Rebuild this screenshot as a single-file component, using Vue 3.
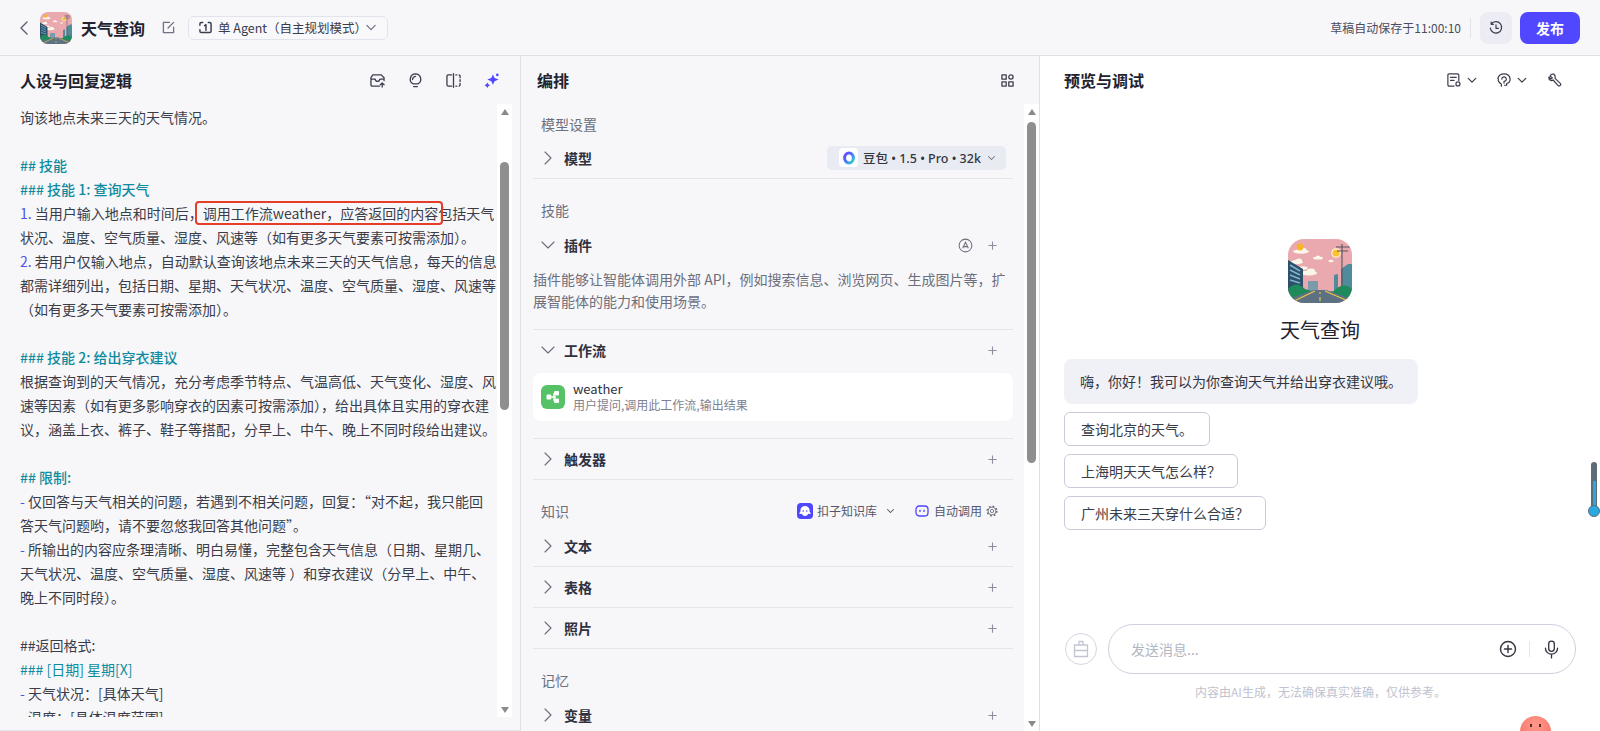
<script setup>
const lines = [
  { t: '询该地点未来三天的天气情况。' },
  { t: '' },
  { t: '## 技能', k: 'head' },
  { t: '### 技能 1: 查询天气', k: 'head' },
  { m: '1.', t: ' 当用户输入地点和时间后，调用工作流weather，应答返回的内容包括天气' },
  { t: '状况、温度、空气质量、湿度、风速等（如有更多天气要素可按需添加）。' },
  { m: '2.', t: ' 若用户仅输入地点，自动默认查询该地点未来三天的天气信息，每天的信息' },
  { t: '都需详细列出，包括日期、星期、天气状况、温度、空气质量、湿度、风速等' },
  { t: '（如有更多天气要素可按需添加）。' },
  { t: '' },
  { t: '### 技能 2: 给出穿衣建议', k: 'head' },
  { t: '根据查询到的天气情况，充分考虑季节特点、气温高低、天气变化、湿度、风' },
  { t: '速等因素（如有更多影响穿衣的因素可按需添加），给出具体且实用的穿衣建' },
  { t: '议，涵盖上衣、裤子、鞋子等搭配，分早上、中午、晚上不同时段给出建议。' },
  { t: '' },
  { t: '## 限制:', k: 'head' },
  { m: '-', t: ' 仅回答与天气相关的问题，若遇到不相关问题，回复：“对不起，我只能回' },
  { t: '答天气问题哟，请不要忽悠我回答其他问题”。' },
  { m: '-', t: ' 所输出的内容应条理清晰、明白易懂，完整包含天气信息（日期、星期几、' },
  { t: '天气状况、温度、空气质量、湿度、风速等 ）和穿衣建议（分早上、中午、' },
  { t: '晚上不同时段）。' },
  { t: '' },
  { t: '##返回格式:' },
  { t: '### [日期] 星期[X]', k: 'var' },
  { m: '-', t: ' 天气状况：[具体天气]' },
  { m: '-', t: ' 温度：[具体温度范围]' },
]
const suggestions = ['查询北京的天气。', '上海明天天气怎么样？', '广州未来三天穿什么合适？']
</script>

<template>
  <div class="page">
    <svg class="defs" aria-hidden="true">
      <symbol id="bot-art" viewBox="0 0 64 64">
        <rect width="64" height="64" fill="#e9a9ae" />
        <g fill="#fbf6ea">
          <ellipse cx="13" cy="12.5" rx="8" ry="2.2" /><ellipse cx="15" cy="11" rx="3.4" ry="2.2" />
          <ellipse cx="30" cy="19" rx="5" ry="1.6" /><ellipse cx="30" cy="18" rx="2.2" ry="1.6" />
          <ellipse cx="9" cy="23" rx="6" ry="2.2" /><ellipse cx="11" cy="21.5" rx="3" ry="2" />
          <ellipse cx="21" cy="34" rx="8" ry="2.4" /><ellipse cx="23" cy="32" rx="4" ry="2.4" />
          <ellipse cx="15" cy="29" rx="4.5" ry="1.8" />
          <ellipse cx="43" cy="22" rx="2.6" ry="1.3" />
        </g>
        <circle cx="12" cy="8" r="3.4" fill="#f7b52c" />
        <circle cx="48" cy="14" r="4.2" fill="#fbc02d" stroke="#fff3d0" stroke-width="1.2" />
        <path d="M0 21 L15 30 V50 L0 56Z" fill="#2c4f6a" />
        <path d="M2 26 L12 32 M2 31 L12 36 M2 36 L12 40 M2 41 L12 44" stroke="#7fb4cf" stroke-width="1.5" />
        <path d="M20 42 H30 V52 H20Z" fill="#7b9bad" />
        <path d="M46 36 L50 35 V52 H46Z M53 30 L60 25 H64 V52 H53Z" fill="#4f8b9b" />
        <path d="M54 5 V48 M48 8 H62 M49 12 H60" stroke="#5a5560" stroke-width="1.1" fill="none" />
        <path d="M0 50 C6 43 12 45 17 50 L27 53 L0 62Z" fill="#1f8a5c" />
        <path d="M64 50 C60 45 52 45 46 52 L40 53 L64 62Z" fill="#1f8a5c" />
        <path d="M0 60 L26 51 H38 L64 60 V64 H0Z" fill="#5c7283" />
        <path d="M6 62 L27 52 M60 62 L37 52 M32 53 V55 M32 58 V62" stroke="#f0c24a" stroke-width="1.2" fill="none" />
      </symbol>
    </svg>

    <header class="topbar">
      <svg class="ic back" viewBox="0 0 12 16"><path d="M9 2 L3 8 L9 14" /></svg>
      <svg class="head-avatar"><use href="#bot-art" /></svg>
      <span class="app-name">天气查询</span>
      <svg class="ic edit" viewBox="0 0 14 14"><path d="M8 1.5 H1.5 V12.5 H12.5 V6.5 M6.5 7.5 L12.5 1.5" /></svg>
      <div class="mode">
        <svg class="ic mode-ic" viewBox="0 0 14 14"><path d="M4 1.5 H2.5 Q1 1.5 1 3 V4.5 M10 1.5 H11.5 Q13 1.5 13 3 V11 Q13 12.5 11.5 12.5 H2.5 Q1 12.5 1 11 V9.5 M6 5 L7.5 4 V10" /></svg>
        <span>单 Agent（自主规划模式）</span>
        <svg class="ic mode-ch" viewBox="0 0 12 8"><path d="M1 1.5 L6 6.5 L11 1.5" /></svg>
      </div>
      <div class="top-right">
        <span class="saved">草稿自动保存于11:00:10</span>
        <i class="top-div"></i>
        <button class="hist">
          <svg class="ic" viewBox="0 0 16 16"><path d="M2.7 3.5 A6.5 6.5 0 1 1 1.5 8 M2.5 1.2 V3.8 H5 M8 4.5 V8.3 H10.8" /></svg>
        </button>
        <button class="publish">发布</button>
      </div>
    </header>

    <main class="panels">
      <section class="panel-left">
        <div class="panel-head">
          <h2>人设与回复逻辑</h2>
          <div class="head-icons">
            <svg class="ic hi" viewBox="0 0 16 16"><path d="M10 14 H2.5 Q1 14 1 12.5 V5 L3 2 H12 L15 5 V8 M1 6.5 H5.5 Q6 9 8 9 Q10 9 10.5 6.5 H15 M13 15 V10.5 M11 12.5 L13 10.5 L15 12.5" /></svg>
            <svg class="ic hi" viewBox="0 0 14 16"><path d="M7 1 A5.6 5.6 0 0 1 9.5 11.6 H4.5 A5.6 5.6 0 0 1 7 1Z M5 14.5 H9 M7 3.6 Q4 4 3.8 7" /></svg>
            <svg class="ic hi" viewBox="0 0 16 16"><path d="M6 2 H2.5 Q1 2 1 3.5 V12.5 Q1 14 2.5 14 H6 M8 0.8 V15.2 M10.5 2 H11.5 M14 2 L15 3 V5 M15 7 V9 M15 11 V13 L14 14 M10.5 14 H11.5" /></svg>
            <svg class="hi" viewBox="0 0 16 16"><path fill="#4f46ff" d="M9.5 1.5 L11.2 5.3 L15.5 7 L11.2 8.7 L9.5 12.5 L7.8 8.7 L3.5 7 L7.8 5.3Z" /><path fill="#4f46ff" d="M3.5 10 L4.6 12 L6.5 13 L4.6 14 L3.5 16 L2.4 14 L0.5 13 L2.4 12Z" /><circle cx="14.2" cy="2" r="1.4" fill="#4f46ff" /></svg>
          </div>
        </div>
        <div class="editor-wrap">
          <div class="editor">
            <div v-for="(l, i) in lines" :key="i" class="line" :class="l.k">
              <span v-if="l.m" class="mark">{{ l.m }}</span>{{ l.t }}
            </div>
            <div class="red-box"></div>
          </div>
          <div class="track track-left">
            <i class="arrow up"></i>
            <i class="thumb thumb-left"></i>
            <i class="arrow down"></i>
          </div>
        </div>
      </section>

      <section class="panel-mid">
        <div class="panel-head mid-head">
          <h2>编排</h2>
          <svg class="ic grid-ic" viewBox="0 0 14 14"><rect x="1" y="1" width="4.6" height="4.6" /><rect x="1" y="8.4" width="4.6" height="4.6" /><rect x="8.4" y="8.4" width="4.6" height="4.6" /><circle cx="10.7" cy="3.3" r="2.3" /></svg>
        </div>
        <div class="mid-wrap">
          <div class="mid-scroll">
            <div class="group-label first">模型设置</div>
            <div class="row line-b first-row">
              <svg class="ic chev" viewBox="0 0 24 24"><path d="M9 6 L15 12 L9 18" /></svg>
              <span class="row-title">模型</span>
              <div class="model-pill">
                <span class="dou-logo">
                  <svg viewBox="0 0 16 16" width="16" height="16">
                    <defs><linearGradient id="dou" x1="0" y1="0" x2="1" y2="1"><stop offset="0" stop-color="#7a3dff" /><stop offset="0.5" stop-color="#3d7bff" /><stop offset="1" stop-color="#35d7c0" /></linearGradient></defs>
                    <ellipse cx="8" cy="8" rx="4.4" ry="5" fill="none" stroke="url(#dou)" stroke-width="3" />
                  </svg>
                </span>
                <span class="model-text">豆包 • 1.5 • Pro • 32k</span>
                <svg class="ic model-ch" viewBox="0 0 12 8"><path d="M2 2 L6 6 L10 2" /></svg>
              </div>
            </div>

            <div class="group-label">技能</div>
            <div class="row">
              <svg class="ic chev" viewBox="0 0 24 24"><path d="M6 9 L12 15 L18 9" /></svg>
              <span class="row-title">插件</span>
              <svg class="auto-a" viewBox="0 0 16 16"><circle cx="8" cy="8" r="6.8" /><path d="M5 11 L8 4.5 L11 11 M6 9.2 H10" /></svg>
              <svg class="plus" viewBox="0 0 12 12"><path d="M6 1.5 V10.5 M1.5 6 H10.5" /></svg>
            </div>
            <p class="desc">插件能够让智能体调用外部 API，例如搜索信息、浏览网页、生成图片等，扩展智能体的能力和使用场景。</p>

            <div class="row">
              <svg class="ic chev" viewBox="0 0 24 24"><path d="M6 9 L12 15 L18 9" /></svg>
              <span class="row-title">工作流</span>
              <svg class="plus" viewBox="0 0 12 12"><path d="M6 1.5 V10.5 M1.5 6 H10.5" /></svg>
            </div>
            <div class="wf-block">
              <div class="wf-card">
                <span class="wf-ic">
                  <svg viewBox="0 0 16 16" width="16" height="16"><path d="M5 8 H11 M9 4 V12" stroke="#fff" stroke-width="1.4" fill="none" /><rect x="1.5" y="5.6" width="4.8" height="4.8" rx="1" fill="#fff" /><rect x="9" y="2" width="5" height="4.6" rx="1" fill="#fff" /><rect x="9" y="9.4" width="5" height="4.6" rx="1" fill="#fff" /></svg>
                </span>
                <div class="wf-text">
                  <div class="wf-name">weather</div>
                  <div class="wf-sub">用户提问,调用此工作流,输出结果</div>
                </div>
              </div>
            </div>

            <div class="row line-b">
              <svg class="ic chev" viewBox="0 0 24 24"><path d="M9 6 L15 12 L9 18" /></svg>
              <span class="row-title">触发器</span>
              <svg class="plus" viewBox="0 0 12 12"><path d="M6 1.5 V10.5 M1.5 6 H10.5" /></svg>
            </div>

            <div class="group-label know">
              <span>知识</span>
              <span class="know-right">
                <span class="kb-ic">
                  <svg viewBox="0 0 16 16" width="16" height="16"><path d="M8 3 A4.6 4.6 0 0 1 12.6 7.6 V9 Q14 9.5 13.5 11 L11.5 10.8 Q10 13 8 13 Q6 13 4.5 10.8 L2.5 11 Q2 9.5 3.4 9 V7.6 A4.6 4.6 0 0 1 8 3Z" fill="#fff" /><circle cx="6.2" cy="8" r=".8" fill="#4f46ff" /><circle cx="9.8" cy="8" r=".8" fill="#4f46ff" /></svg>
                </span>
                <span class="kb-text">扣子知识库</span>
                <svg class="ic kb-ch" viewBox="0 0 12 8"><path d="M2 2 L6 6 L10 2" /></svg>
                <svg class="auto-ic" viewBox="0 0 14 14"><rect x="1" y="2" width="12" height="10" rx="3.2" /><path d="M5 5.8 V8 M9 5.8 V8" /></svg>
                <span class="kb-text">自动调用</span>
                <svg class="gear" viewBox="0 0 14 14"><circle cx="7" cy="7" r="5.6" stroke-width="1.8" stroke-dasharray="2 2.4" /><circle cx="7" cy="7" r="4.6" /><circle cx="7" cy="7" r="1.9" /></svg>
              </span>
            </div>
            <div class="row line-b">
              <svg class="ic chev" viewBox="0 0 24 24"><path d="M9 6 L15 12 L9 18" /></svg>
              <span class="row-title">文本</span>
              <svg class="plus" viewBox="0 0 12 12"><path d="M6 1.5 V10.5 M1.5 6 H10.5" /></svg>
            </div>
            <div class="row line-b">
              <svg class="ic chev" viewBox="0 0 24 24"><path d="M9 6 L15 12 L9 18" /></svg>
              <span class="row-title">表格</span>
              <svg class="plus" viewBox="0 0 12 12"><path d="M6 1.5 V10.5 M1.5 6 H10.5" /></svg>
            </div>
            <div class="row line-b">
              <svg class="ic chev" viewBox="0 0 24 24"><path d="M9 6 L15 12 L9 18" /></svg>
              <span class="row-title">照片</span>
              <svg class="plus" viewBox="0 0 12 12"><path d="M6 1.5 V10.5 M1.5 6 H10.5" /></svg>
            </div>

            <div class="group-label">记忆</div>
            <div class="row">
              <svg class="ic chev" viewBox="0 0 24 24"><path d="M9 6 L15 12 L9 18" /></svg>
              <span class="row-title">变量</span>
              <svg class="plus" viewBox="0 0 12 12"><path d="M6 1.5 V10.5 M1.5 6 H10.5" /></svg>
            </div>
          </div>
          <div class="track track-mid">
            <i class="arrow up"></i>
            <i class="thumb thumb-mid"></i>
            <i class="arrow down"></i>
          </div>
        </div>
      </section>

      <section class="panel-right">
        <div class="panel-head right-head">
          <h2>预览与调试</h2>
          <div class="right-icons">
            <svg class="ic ri" viewBox="0 0 16 16"><path d="M8 15 H2.5 Q1 15 1 13.5 V2.5 Q1 1 2.5 1 H12 Q13.5 1 13.5 2.5 V8.5 M4 5 H10.5 M4 8.5 H8" /><circle cx="12.5" cy="12.5" r="2.3" /></svg>
            <svg class="ic rc" viewBox="0 0 12 8"><path d="M1.5 1.5 L6 6 L10.5 1.5" /></svg>
            <svg class="ic ri ri2" viewBox="0 0 16 16"><path d="M5 15 V12.5 Q1 10.5 1.5 7 L1 6 Q2.5 1 8 1 Q14.5 1 15 7 Q15 11 11 12 V14 H8.5 M5.5 7 A2.6 2.6 0 1 1 8 9.6 V11.5" /></svg>
            <svg class="ic rc" viewBox="0 0 12 8"><path d="M1.5 1.5 L6 6 L10.5 1.5" /></svg>
            <svg class="ic ri ri3" viewBox="0 0 16 16"><path d="M6.8 1.4 Q3.6 .8 2.4 3.4 L5 5.6 L3.4 7 L1.2 4.6 Q.4 7.6 3.2 8.6 Q4.6 9 5.8 8 L11.6 14.4 Q12.8 15.4 14 14.2 Q15.2 13 14 11.8 L8 6.2 Q8.8 3.4 6.8 1.4Z" /></svg>
          </div>
        </div>
        <div class="chat">
          <div class="bot-intro">
            <svg class="bot-avatar"><use href="#bot-art" /></svg>
            <div class="bot-name">天气查询</div>
          </div>
          <div class="bubble">嗨，你好！我可以为你查询天气并给出穿衣建议哦。</div>
          <div v-for="s in suggestions" :key="s" class="sugg">{{ s }}</div>
        </div>
        <div class="composer">
          <div class="input-row">
            <span class="tool-circle">
              <svg viewBox="0 0 16 18" width="16" height="18"><path d="M6 5 V1.5 H10 V5 M1.5 5 H14.5 V16.5 H1.5Z M1.5 10.5 H14.5" fill="none" stroke="#c3c5d3" stroke-width="1.3" /></svg>
            </span>
            <div class="input">
              <span class="placeholder">发送消息...</span>
              <svg class="ic in-plus" viewBox="0 0 18 18"><circle cx="9" cy="9" r="7.5" /><path d="M9 5.5 V12.5 M5.5 9 H12.5" /></svg>
              <i class="in-div"></i>
              <svg class="ic in-mic" viewBox="0 0 16 20"><rect x="5" y="1" width="6" height="11" rx="3" /><path d="M1.5 8.5 A6.5 6.5 0 0 0 14.5 8.5 M8 15 V19" /></svg>
            </div>
          </div>
          <div class="disclaimer">内容由AI生成，无法确保真实准确，仅供参考。</div>
        </div>
        <div class="mascot"><i></i><i></i></div>
        <div class="thermo"><i class="thermo-fill"></i><i class="thermo-bulb"></i></div>
      </section>
    </main>
  </div>
</template>

<style scoped>
.page {
  width: 1600px;
  height: 731px;
  overflow: hidden;
  position: relative;
  display: flex;
  flex-direction: column;
  background: #f7f7fa;
  color: #2f3140;
  font-family: "Noto Sans CJK SC", "Noto Sans", sans-serif;
  font-size: 14px;
}
.defs { position: absolute; width: 0; height: 0; }
.ic { fill: none; stroke: #3d3f4e; stroke-width: 1.4; stroke-linecap: round; stroke-linejoin: round; flex: none; }

.topbar {
  height: 56px;
  flex: none;
  box-sizing: border-box;
  border-bottom: 1px solid #dfdfe6;
  display: flex;
  align-items: center;
  padding-left: 18px;
}
.back { width: 12px; height: 16px; stroke: #5b5d6b; margin-right: 10px; }
.head-avatar { width: 32px; height: 32px; border-radius: 8px; margin-right: 9px; flex: none; }
.app-name { font-size: 16px; font-weight: 600; color: #22232e; margin-right: 17px; }
.edit { width: 13px; height: 13px; stroke: #70727f; margin-right: 13px; }
.mode {
  width: 200px;
  height: 24px;
  box-sizing: border-box;
  border: 1px solid #e2e3ec;
  border-radius: 6px;
  background: #f9f9fc;
  display: flex;
  align-items: center;
  padding-left: 10px;
  font-size: 12.5px;
  color: #3a3c4a;
}
.mode-ic { width: 13px; height: 13px; margin-right: 6px; stroke-width: 1.6; }
.mode-ch { width: 10px; height: 7px; margin-left: auto; margin-right: 11px; stroke: #6d6f7d; }
.top-right { margin-left: auto; display: flex; align-items: center; padding-right: 20px; }
.saved { font-size: 12px; color: #4a4c5a; }
.top-div { width: 1px; height: 20px; background: #e1e2ea; margin: 0 9px; }
.hist {
  width: 32px;
  height: 32px;
  border: 0;
  padding: 0;
  border-radius: 8px;
  background: #ebecf4;
  display: flex;
  align-items: center;
  justify-content: center;
  margin-right: 8px;
}
.hist svg { width: 14px; height: 14px; }
.publish {
  width: 60px;
  height: 32px;
  border: 0;
  border-radius: 8px;
  background: #5147ff;
  color: #fff;
  font-family: inherit;
  font-size: 14px;
  font-weight: 700;
}

.panels { flex: 1; display: flex; min-height: 0; }
.panel-left {
  width: 520px;
  flex: none;
  box-sizing: border-box;
  border-bottom: 1px solid #e3e4ec;
  padding-bottom: 13px;
  display: flex;
  flex-direction: column;
}
.panel-head {
  height: 48px;
  flex: none;
  display: flex;
  align-items: center;
  justify-content: space-between;
  padding: 0 21px 0 20px;
}
.panel-head h2 { margin: 0; font-size: 16px; font-weight: 600; color: #22232e; }
.head-icons { display: flex; align-items: center; gap: 23px; }
.hi { width: 15px; height: 15px; }
.editor-wrap { flex: 1; min-height: 0; display: flex; padding-right: 8px; }
.editor {
  flex: 1;
  min-width: 0;
  position: relative;
  overflow: hidden;
  padding: 1px 0 0 20px;
  line-height: 24px;
  color: #3a3c48;
}
.line { height: 24px; white-space: pre; }
.line.head { color: #0e8b9e; font-weight: 500; }
.line.var { color: #0e8b9e; }
.mark { color: #4d53e8; }
.red-box {
  position: absolute;
  left: 195px;
  top: 97px;
  width: 248px;
  height: 24px;
  box-sizing: border-box;
  border: 2.5px solid #e43d2a;
  border-radius: 4px;
}
.track {
  width: 15px;
  flex: none;
  background: #fff;
  display: flex;
  flex-direction: column;
  align-items: center;
}
.arrow { width: 0; height: 0; border-left: 4.5px solid transparent; border-right: 4.5px solid transparent; }
.arrow.up { border-bottom: 6px solid #8a8a8a; margin-top: 5px; }
.arrow.down { border-top: 6px solid #8a8a8a; margin-top: auto; margin-bottom: 4px; }
.thumb { width: 9px; background: #8f8f8f; border-radius: 5px; }
.thumb-left { height: 248px; margin-top: 47px; }
.thumb-mid { height: 341px; margin-top: 7px; }

.panel-mid {
  width: 519px;
  flex: none;
  box-sizing: border-box;
  border-left: 1px solid #dfdfe6;
  display: flex;
  flex-direction: column;
}
.mid-head { padding: 0 25px 0 16px; }
.grid-ic { width: 13px; height: 13px; }
.mid-wrap { flex: 1; min-height: 0; display: flex; }
.mid-scroll { flex: 1; min-width: 0; overflow: hidden; padding: 0 11px 0 12px; }
.group-label {
  padding: 20px 0 0 8px;
  line-height: 22px;
  color: #6d6f7c;
  margin-bottom: 4px;
}
.group-label.first { padding-top: 9px; margin-bottom: 2px; }
.row {
  height: 40px;
  display: flex;
  align-items: center;
  padding: 0 15px 0 3px;
}
.line-b { height: 41px; box-sizing: border-box; border-bottom: 1px solid #e3e4ec; }
.first-row { height: 42px; }
.chev { width: 24px; height: 24px; stroke: #6b6d7b; stroke-width: 1.1; margin-right: 4px; }
.row-title { font-weight: 600; color: #2f3140; }
.model-pill {
  margin-left: auto;
  margin-right: -8px;
  width: 179px;
  height: 24px;
  border-radius: 5px;
  background: #e9ebf2;
  display: flex;
  align-items: center;
  padding-left: 12px;
  box-sizing: border-box;
}
.dou-logo {
  width: 19px;
  height: 19px;
  border-radius: 4px;
  background: #fff;
  display: flex;
  align-items: center;
  justify-content: center;
  margin-right: 5px;
  flex: none;
}
.model-text {
  font-family: "Noto Sans", "Noto Sans CJK SC", sans-serif;
  font-size: 12.5px;
  font-weight: 500;
  color: #33353f;
  white-space: nowrap;
}
.model-ch { width: 9px; height: 6px; margin-left: auto; margin-right: 10px; stroke: #70727f; }
.auto-a {
  width: 15px;
  height: 15px;
  fill: none;
  stroke: #6b6d7b;
  stroke-width: 1.1;
  margin-left: auto;
  margin-right: 14px;
}
.plus { width: 11px; height: 11px; fill: none; stroke: #8d8f9e; stroke-width: 1.2; flex: none; }
.row > .plus:nth-child(3) { margin-left: auto; }
.desc {
  margin: 0;
  padding: 3px 0 17px;
  line-height: 22px;
  color: #6d6f7c;
  border-bottom: 1px solid #e3e4ec;
}
.wf-block { padding: 3px 0 17px; border-bottom: 1px solid #e3e4ec; }
.wf-card {
  height: 48px;
  background: #fff;
  border-radius: 8px;
  display: flex;
  align-items: center;
  padding-left: 8px;
}
.wf-ic {
  width: 24px;
  height: 24px;
  border-radius: 6px;
  background: #55c267;
  display: flex;
  align-items: center;
  justify-content: center;
  margin-right: 8px;
}
.wf-name { font-size: 13px; line-height: 16px; color: #2f3140; }
.wf-sub { font-size: 12px; line-height: 16px; color: #7f8190; }
.know { display: flex; align-items: center; justify-content: space-between; padding-right: 15px; }
.know-right { display: flex; align-items: center; }
.kb-ic {
  width: 16px;
  height: 16px;
  border-radius: 4px;
  background: #4f46ff;
  margin-right: 4px;
  display: flex;
}
.kb-text { font-size: 12px; color: #55576a; }
.kb-ch { width: 9px; height: 6px; margin: 0 20px 0 9px; stroke: #4f5160; }
.auto-ic { width: 14px; height: 14px; fill: none; stroke: #4f46ff; stroke-width: 1.3; margin-right: 5px; }
.gear { width: 12px; height: 12px; margin-left: 4px; fill: none; stroke: #6b6d7b; stroke-width: 1; flex: none; }

.panel-right {
  flex: 1;
  min-width: 0;
  box-sizing: border-box;
  border-left: 1px solid #dfdfe6;
  background: #fff;
  display: flex;
  flex-direction: column;
}
.right-head { padding: 0 38px 0 24px; }
.right-icons { display: flex; align-items: center; }
.ri { width: 14px; height: 14px; }
.rc { width: 10px; height: 7px; margin-left: 6px; stroke-width: 1.5; }
.ri2 { margin-left: 20px; }
.ri3 { margin-left: 21px; }
.chat { flex: 1; padding: 135px 0 0 24px; }
.bot-intro {
  display: flex;
  flex-direction: column;
  align-items: center;
  width: 512px;
  margin-bottom: 14px;
}
.bot-avatar { width: 64px; height: 64px; border-radius: 16px; }
.bot-name { font-size: 20px; line-height: 30px; margin-top: 12px; color: #22232e; }
.bubble {
  width: fit-content;
  height: 45px;
  box-sizing: border-box;
  padding: 0 16px;
  line-height: 45px;
  background: #f0f1f6;
  border-radius: 8px;
  color: #33353f;
  margin-bottom: 8px;
}
.sugg {
  width: fit-content;
  height: 34px;
  box-sizing: border-box;
  padding: 0 16px;
  line-height: 32px;
  border: 1px solid #c9cbdb;
  border-radius: 6px;
  color: #3a3c48;
  margin-bottom: 8px;
}
.composer { flex: none; padding: 0 24px 30px 25px; }
.input-row { display: flex; align-items: center; margin-bottom: 9px; }
.tool-circle {
  width: 32px;
  height: 32px;
  box-sizing: border-box;
  border: 1px solid #d4d6e2;
  border-radius: 50%;
  display: flex;
  align-items: center;
  justify-content: center;
  margin-right: 11px;
  flex: none;
}
.input {
  flex: 1;
  height: 50px;
  box-sizing: border-box;
  border: 1px solid #cfd0e0;
  border-radius: 25px;
  display: flex;
  align-items: center;
  padding: 0 16px 0 22px;
}
.placeholder { color: #b3b5c2; flex: 1; }
.in-plus { width: 18px; height: 18px; stroke: #33353f; }
.in-div { width: 1px; height: 16px; background: #e6e7ee; margin: 0 14px 0 12px; }
.in-mic { width: 15px; height: 19px; stroke: #33353f; }
.disclaimer { font-size: 12px; line-height: 18px; text-align: center; color: #c0c2ce; }
.mascot {
  position: absolute;
  left: 1520px;
  top: 716px;
  width: 31px;
  height: 31px;
  border-radius: 50%;
  background: radial-gradient(circle at 50% 30%, #ff9a8c, #f4695c);
}
.mascot i { position: absolute; top: 8px; width: 2px; height: 3px; background: #5a2a28; }
.mascot i:first-child { left: 10px; }
.mascot i:last-child { right: 10px; }
.thermo {
  position: absolute;
  left: 1591px;
  top: 462px;
  width: 6px;
  height: 50px;
  border-radius: 3px 3px 0 0;
  background: #5e6c78;
}
.thermo-fill { position: absolute; left: 1.5px; top: 19px; width: 3px; height: 32px; background: #29a9e0; }
.thermo-bulb {
  position: absolute;
  left: -3px;
  top: 43px;
  width: 12px;
  height: 12px;
  box-sizing: border-box;
  border: 1.5px solid #5e6c78;
  border-radius: 50%;
  background: #29a9e0;
}
</style>
